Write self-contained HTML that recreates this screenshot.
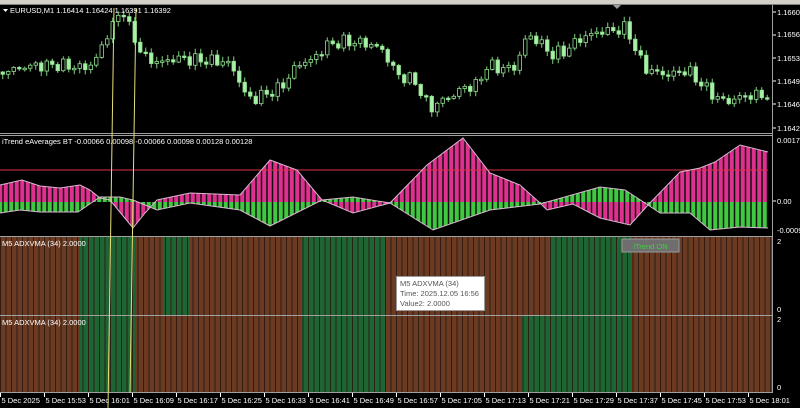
<!DOCTYPE html>
<html><head><meta charset="utf-8">
<style>
html,body{margin:0;padding:0;background:#000;width:800px;height:408px;overflow:hidden}
svg{display:block}
text{font-family:"Liberation Sans",sans-serif;font-size:7.5px}
</style></head><body>
<svg id="s" width="800" height="408" viewBox="0 0 800 408" xmlns="http://www.w3.org/2000/svg">
<rect width="800" height="408" fill="#000"/>
<rect x="0" y="0" width="800" height="4" fill="#d4d0c8"/>
<line x1="0" y1="4.5" x2="800" y2="4.5" stroke="#808080"/>
<g id="candles"></g>
<g id="ind"></g>
<g id="adx"></g>
<g stroke="#a0a0a0" fill="none" stroke-width="1">
<line x1="0" y1="133.5" x2="773" y2="133.5"/>
<line x1="0" y1="135.5" x2="773" y2="135.5"/>
<line x1="0" y1="236.5" x2="773" y2="236.5"/>
<line x1="0" y1="315.5" x2="773" y2="315.5"/>
<line x1="0" y1="392.5" x2="773" y2="392.5"/>
<line x1="772.5" y1="5" x2="772.5" y2="393"/>
</g>
<polygon points="613,5 621,5 617,9" fill="#a0a0a0"/>
<g fill="#fff" font-size="6.5">
<text x="777" y="15" font-size="6.5">1.16600</text>
<text x="777" y="37" font-size="6.5">1.16565</text>
<text x="777" y="61" font-size="6.5">1.16530</text>
<text x="777" y="84" font-size="6.5">1.16495</text>
<text x="777" y="107" font-size="6.5">1.16460</text>
<text x="777" y="131" font-size="6.5">1.16425</text>
<text x="777" y="143" font-size="6.5">0.00178</text>
<text x="777" y="204" font-size="6.5">0.00</text>
<text x="777" y="233" font-size="6.5">-0.0009</text>
<text x="777" y="244" font-size="6.5">2</text>
<text x="777" y="312" font-size="6.5">0</text>
<text x="777" y="322" font-size="6.5">2</text>
<text x="777" y="390" font-size="6.5">0</text>
</g>
<g stroke="#fff"><line x1="773" y1="12" x2="776" y2="12"/><line x1="773" y1="35" x2="776" y2="35"/><line x1="773" y1="58" x2="776" y2="58"/><line x1="773" y1="81" x2="776" y2="81"/><line x1="773" y1="104" x2="776" y2="104"/><line x1="773" y1="128" x2="776" y2="128"/><line x1="773" y1="201" x2="776" y2="201"/></g>
<polygon points="3,9 8,9 5.5,12" fill="#fff"/>
<text x="10" y="13" fill="#fff">EURUSD,M1  1.16414 1.16424 1.16391 1.16392</text>
<text x="2" y="144" fill="#fff" font-size="7">iTrend eAverages BT -0.00066 0.00098 -0.00066 0.00098 0.00128 0.00128</text>
<text x="2" y="246" fill="#fff" font-size="7">M5 ADXVMA (34) 2.0000</text>
<text x="2" y="325" fill="#fff" font-size="7">M5 ADXVMA (34) 2.0000</text>
<rect x="622" y="239" width="57" height="13" fill="#6e6e6e" stroke="#999"/>
<text x="650.5" y="249" fill="#3fd23f" font-size="9" text-anchor="middle">iTrend ON</text>
<rect x="396.5" y="276.5" width="88" height="34" fill="#fff" stroke="#999"/>
<text x="400" y="286" fill="#555" font-size="8">M5 ADXVMA (34)</text>
<text x="400" y="296" fill="#555" font-size="8">Time: 2025.12.05 16:56</text>
<text x="400" y="306" fill="#555" font-size="8">Value2: 2.0000</text>
<g id="taxis"></g>
<line x1="114" y1="8" x2="108" y2="408" stroke="#e6e07a" stroke-width="1"/>
<line x1="136" y1="8" x2="130" y2="393" stroke="#e6e07a" stroke-width="1"/>
</svg>
<script>
(function(){
var NS="http://www.w3.org/2000/svg";
function el(p,t,a){var e=document.createElementNS(NS,t);for(var k in a)e.setAttribute(k,a[k]);p.appendChild(e);return e;}
function interp(pts,x){for(var i=0;i<pts.length-1;i++){if(x<=pts[i+1][0]){var a=pts[i],b=pts[i+1];return a[1]+(b[1]-a[1])*(x-a[0])/(b[0]-a[0]);}}return pts[pts.length-1][1];}
var P=5.5;
var price=[[0,72],[15,70],[30,66],[60,65],[90,68],[98,60],[104,48],[112,30],[120,18],[127,10],[132,28],[140,45],[150,60],[165,62],[180,58],[200,60],[230,62],[240,75],[246,92],[255,100],[265,95],[280,90],[290,80],[300,64],[315,60],[330,45],[345,42],[360,42],[375,45],[385,50],[400,75],[420,82],[425,98],[435,108],[445,100],[455,96],[465,88],[480,85],[490,65],[500,68],[520,68],[525,42],[535,36],[545,45],[555,55],[570,50],[580,40],[600,32],[620,30],[630,28],[640,55],[650,70],[670,75],[690,70],[705,85],[720,98],[730,102],[745,96],[770,95]];
var g=document.getElementById('candles');
var prev=interp(price,0);
for(var i=0;i<140;i++){var x=2.75+i*P;if(x>770)break;
var c=interp(price,x+2.75)+Math.sin(i*2.1)*4+Math.cos(i*3.7)*3;var o=prev;
var yt=Math.min(o,c),yb=Math.max(o,c);if(yb-yt<1.5){yb=yt+1.5;}
var wt=yt-1-Math.abs(Math.sin(i*3.1))*4,wb=yb+1+Math.abs(Math.cos(i*2.7))*4;
el(g,'line',{x1:x,y1:wt,x2:x,y2:wb,stroke:'#7fd27f','stroke-width':1});
var up=c<o;
el(g,'rect',{x:x-1.75,y:yt,width:3.5,height:yb-yt,fill:up?'#000':'#a8f0a8',stroke:'#8fe08f','stroke-width':0.8});
prev=c;}
var Z=202;
var U=[[0,185],[22,180],[40,186],[60,188],[80,185],[90,190],[100,198],[110,200],[133,228],[145,213],[157,200],[190,193],[240,195],[270,160],[297,170],[322,200],[353,213],[390,203],[427,165],[463,138],[490,173],[520,185],[540,203],[547,210],[573,204],[600,218],[630,225],[648,205],[680,172],[700,168],[715,162],[740,145],[768,152]];
var L=[[0,213],[20,210],[40,212],[78,212],[100,197],[120,197],[133,200],[157,210],[190,203],[240,210],[270,226],[322,200],[353,197],[390,203],[433,230],[490,210],[540,204],[600,187],[625,190],[648,205],[660,213],[690,213],[710,230],[740,227],[768,228]];
var ig=document.getElementById('ind');
function fillPoly(pts,col){var d='M0,'+Z;for(var x=0;x<=768;x+=2){d+=' L'+x+','+interp(pts,x);}d+=' L768,'+Z+' Z';el(ig,'path',{d:d,fill:col});}
fillPoly(U,'#e0308f');fillPoly(L,'#40c840');
for(var x=3;x<768;x+=P){el(ig,'line',{x1:x,y1:137,x2:x,y2:236,stroke:'#111','stroke-width':1.5});}
var dTop='M0,136';for(var x=0;x<=768;x+=2){dTop+=' L'+x+','+Math.min(interp(U,x),interp(L,x),Z);}dTop+=' L768,136 Z';el(ig,'path',{d:dTop,fill:'#000'});
var dBot='M0,236';for(var x=0;x<=768;x+=2){dBot+=' L'+x+','+Math.max(interp(U,x),interp(L,x),Z);}dBot+=' L768,236 Z';el(ig,'path',{d:dBot,fill:'#000'});
el(ig,'line',{x1:0,y1:170,x2:768,y2:170,stroke:'#e0304a','stroke-width':1});
function pl(pts){var s='';for(var i=0;i<pts.length;i++)s+=pts[i][0]+','+pts[i][1]+' ';el(ig,'polyline',{points:s,fill:'none',stroke:'#d8b8d0','stroke-width':1});}
pl(U);pl(L);
var ag=document.getElementById('adx');
function adx(y,h,greens){el(ag,'rect',{x:0,y:y,width:772,height:h,fill:'#6b3a22'});
for(var i=0;i<greens.length;i++)el(ag,'rect',{x:greens[i][0],y:y,width:greens[i][1]-greens[i][0],height:h,fill:'#1f6533'});
for(var x=0.5;x<772;x+=P)el(ag,'line',{x1:x,y1:y,x2:x,y2:y+h,stroke:'#2a1a12','stroke-width':0.9});}
adx(237,78,[[80,135],[163,190],[301,385],[549,632]]);
adx(316,76,[[80,135],[301,385],[522,632]]);
var tg=document.getElementById('taxis');
el(tg,'rect',{x:0,y:393,width:800,height:15,fill:'#000'});
var labels=['5 Dec 2025','5 Dec 15:53','5 Dec 16:01','5 Dec 16:09','5 Dec 16:17','5 Dec 16:25','5 Dec 16:33','5 Dec 16:41','5 Dec 16:49','5 Dec 16:57','5 Dec 17:05','5 Dec 17:13','5 Dec 17:21','5 Dec 17:29','5 Dec 17:37','5 Dec 17:45','5 Dec 17:53','5 Dec 18:01'];
for(var i=0;i<labels.length;i++){var x=i*44+0.5;el(tg,'line',{x1:x,y1:393,x2:x,y2:397,stroke:'#fff'});var t=el(tg,'text',{x:x+1,y:403,fill:'#fff','font-size':'7'});t.textContent=labels[i];}
})();
</script>
</body></html>
